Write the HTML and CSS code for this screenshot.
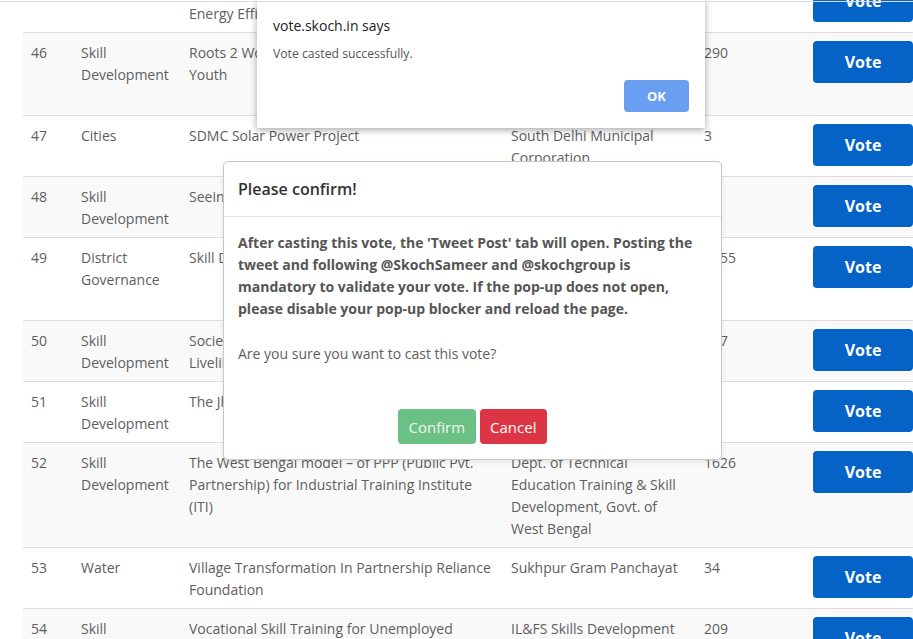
FILE: index.html
```html
<!DOCTYPE html>
<html lang="en">
<head>
<meta charset="utf-8">
<title>SKOCH Vote</title>
<link rel="stylesheet" href="styles.css">
</head>
<body>
<div class="page">
  <table class="nominations">
    <colgroup>
      <col class="c-no"><col class="c-cat"><col class="c-title"><col class="c-org"><col class="c-votes"><col class="c-act">
    </colgroup>
    <tbody>
      <tr>
        <td>45</td><td>Environment</td><td>Conversion of all Street Luminaires to LED for Energy Efficiency</td><td>Nashik Municipal Corporation</td><td>118</td>
        <td><button class="vote">Vote</button></td>
      </tr>
      <tr>
        <td>46</td><td>Skill Development</td><td>Roots 2 Work – Skill Training Programme for Youth</td><td>Department of Employment &amp; Training, Govt. of Odisha</td><td>290</td>
        <td><button class="vote">Vote</button></td>
      </tr>
      <tr>
        <td>47</td><td>Cities</td><td>SDMC Solar Power Project</td><td>South Delhi Municipal Corporation</td><td>3</td>
        <td><button class="vote">Vote</button></td>
      </tr>
      <tr>
        <td>48</td><td>Skill Development</td><td>Seeing is Believing – Vision Care</td><td>Sightsavers India</td><td>21</td>
        <td><button class="vote">Vote</button></td>
      </tr>
      <tr>
        <td>49</td><td>District Governance</td><td>Skill Development Initiative</td><td>Collector &amp; District Magistrate Office, Dantewada, Chhattisgarh</td><td>1155</td>
        <td><button class="vote">Vote</button></td>
      </tr>
      <tr>
        <td>50</td><td>Skill Development</td><td>Society for Employment Promotion &amp; Livelihood Mission</td><td>EGMM, Govt. of Telangana</td><td>127</td>
        <td><button class="vote">Vote</button></td>
      </tr>
      <tr>
        <td>51</td><td>Skill Development</td><td>The Jharkhand Skill Development Programme</td><td>Jharkhand Skill Mission</td><td>12</td>
        <td><button class="vote">Vote</button></td>
      </tr>
      <tr>
        <td>52</td><td>Skill Development</td><td>The West Bengal model – of PPP (Public Pvt. Partnership) for Industrial Training Institute (ITI)</td><td>Dept. of Technical Education Training &amp; Skill Development, Govt. of West Bengal</td><td>1626</td>
        <td><button class="vote">Vote</button></td>
      </tr>
      <tr>
        <td>53</td><td>Water</td><td>Village Transformation In Partnership Reliance Foundation</td><td>Sukhpur Gram Panchayat</td><td>34</td>
        <td><button class="vote">Vote</button></td>
      </tr>
      <tr>
        <td>54</td><td>Skill Development</td><td>Vocational Skill Training for Unemployed Persons with Disabilities</td><td>IL&amp;FS Skills Development Corporation</td><td>209</td>
        <td><button class="vote">Vote</button></td>
      </tr>
    </tbody>
  </table>
</div>

<div class="modal" role="dialog">
  <div class="modal-header">Please confirm!</div>
  <div class="modal-body">
    <p class="notice">After casting this vote, the 'Tweet Post' tab will open. Posting the tweet and following @SkochSameer and @skochgroup is mandatory to validate your vote. If the pop-up does not open, please disable your pop-up blocker and reload the page.</p>
    <p class="question">Are you sure you want to cast this vote?</p>
  </div>
  <div class="modal-footer">
    <button class="btn btn-confirm">Confirm</button>
    <button class="btn btn-cancel">Cancel</button>
  </div>
</div>

<div class="alert" role="alertdialog">
  <div class="alert-title">vote.skoch.in says</div>
  <div class="alert-msg">Vote casted successfully.</div>
  <div class="alert-actions"><button class="alert-ok">OK</button></div>
</div>

<div class="viewport-edge"></div>
</body>
</html>
```
FILE: styles.css
```css
html, body {
  margin: 0;
  padding: 0;
  overflow: hidden;
  background: #fff;
}

body {
  font-family: "Open Sans", "Liberation Sans", sans-serif;
  font-size: 14px;
  color: #5e5e5e;
  position: relative;
  height: 639px;
}

/* thin edge of the window frame along the top */
.viewport-edge {
  position: fixed;
  top: 1px;
  left: 0;
  right: 0;
  height: 1px;
  background: #dadada;
}

.page {
  padding-left: 23px;
}

/* list of nominations, scrolled part-way down */
.nominations {
  margin-top: -29px;
  border-collapse: collapse;
  table-layout: fixed;
  width: 898px;
}

.c-no { width: 50px; }
.c-cat { width: 108px; }
.c-title { width: 322px; }
.c-org { width: 193px; }
.c-votes { width: 109px; }
.c-act { width: 116px; }

.nominations td {
  padding: 9px 8px 7px;
  line-height: 22px;
  vertical-align: top;
  border-top: 1px solid #ddd;
}

.nominations tr:nth-child(even) td {
  background: #f9f9f9;
}

.vote {
  display: block;
  margin-top: -1px;
  width: 100px;
  height: 42px;
  border: 0;
  border-radius: 4px;
  background: #0563c8;
  color: #fff;
  font-family: inherit;
  font-size: 16px;
  font-weight: 700;
  padding: 0;
}

/* confirmation dialog */
.modal {
  position: absolute;
  left: 223px;
  top: 161px;
  width: 497px;
  background: #fff;
  border: 1px solid #c8c8c8;
  border-radius: 5px;
  box-shadow: 0 2px 6px rgba(0, 0, 0, 0.08);
}

.modal-header {
  padding: 15px 14px;
  font-size: 16px;
  line-height: 24px;
  font-weight: 600;
  color: #333;
  border-bottom: 1px solid #e5e5e5;
}

.modal-body {
  padding: 15px 14px;
  color: #555;
}

.modal-body p {
  margin: 0;
  line-height: 22px;
}

.notice {
  font-weight: 700;
}

.modal-body .question {
  margin-top: 23px;
  color: #5e5e5e;
}

.modal-footer {
  padding: 29px 14px 15px;
  display: flex;
  justify-content: center;
  gap: 4px;
}

.btn {
  height: 35px;
  padding: 0 10.5px;
  border: 0;
  border-radius: 4px;
  font-family: inherit;
  font-size: 15px;
  color: #fff;
}

.btn-confirm {
  background: #6bc185;
  color: #eef8f0;
}

.btn-cancel {
  background: #dc3545;
}

/* browser alert box */
.alert {
  position: absolute;
  left: 257px;
  top: 0;
  width: 416px;
  padding: 16px;
  background: #fff;
  box-shadow: 0 2px 7px rgba(0, 0, 0, 0.35);
}

.alert-title {
  font-size: 14px;
  line-height: 20px;
  color: #222;
}

.alert-msg {
  margin-top: 10px;
  font-size: 12.2px;
  line-height: 16px;
  color: #555;
}

.alert-actions {
  margin-top: 18px;
  display: flex;
  justify-content: flex-end;
}

.alert-ok {
  width: 65px;
  height: 32px;
  border: 0;
  border-radius: 4px;
  background: #6a9ef0;
  color: #fff;
  font-family: inherit;
  font-size: 13px;
  font-weight: 700;
}
```
